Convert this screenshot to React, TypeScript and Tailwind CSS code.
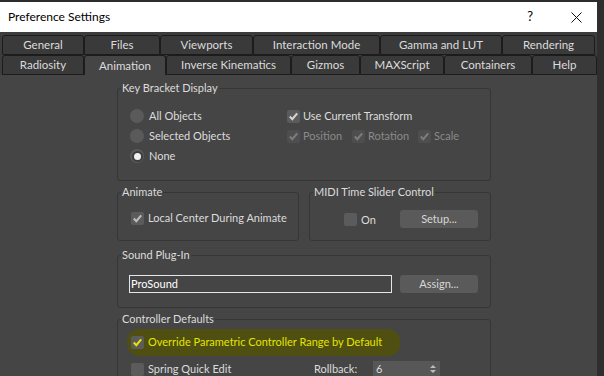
import React from 'react';

const font = "font-['Lato',sans-serif]";

const rowOne = [
  { label: 'General', w: 'w-[82px]' },
  { label: 'Files', w: 'w-[76px]' },
  { label: 'Viewports', w: 'w-[93px]' },
  { label: 'Interaction Mode', w: 'w-[127px]' },
  { label: 'Gamma and LUT', w: 'w-[122px]' },
  { label: 'Rendering', w: 'w-[93px]' },
];

const rowTwo = [
  { label: 'Radiosity', w: 'w-[82px]' },
  { label: 'Animation', w: 'w-[82px]', active: true },
  { label: 'Inverse Kinematics', w: 'w-[125px]' },
  { label: 'Gizmos', w: 'w-[69px]' },
  { label: 'MAXScript', w: 'w-[84px]' },
  { label: 'Containers', w: 'w-[88px]' },
  { label: 'Help', w: 'w-[65px]' },
];

interface CheckProps {
  checked?: boolean;
  disabled?: boolean;
  mark?: string;
}

const Check: React.FC<CheckProps> = ({ checked = false, disabled = false, mark = '#d4d4d4' }) => (
  <span
    className={`flex h-[13px] w-[13px] shrink-0 items-center justify-center rounded-[2px] ${
      disabled ? 'bg-[#4e4e4e]' : 'bg-[#5b5b5b]'
    }`}
  >
    {checked && (
      <svg width="11" height="11" viewBox="0 0 11 11">
        <path d="M1.8 5.6 L4.3 8.2 L9.2 2.4" fill="none" stroke={disabled ? '#7c7c7c' : mark} strokeWidth="2.1" />
      </svg>
    )}
  </span>
);

const Radio: React.FC<{ selected?: boolean; label: string }> = ({ selected = false, label }) => (
  <div className="flex h-[20px] items-center gap-[5px]">
    <span className="flex h-[14px] w-[14px] items-center justify-center rounded-full bg-[#5a5a5a]">
      {selected && <span className="h-[7px] w-[7px] rounded-full bg-[#f2f2f2] ring-2 ring-[#3e3e3e]" />}
    </span>
    <span>{label}</span>
  </div>
);

const Group: React.FC<{ title: string; className?: string; children: React.ReactNode }> = ({
  title,
  className = '',
  children,
}) => (
  <fieldset className={`min-w-0 rounded-[3px] border border-[#363636] ${className}`}>
    <legend className="ml-[3px] px-px text-[11px] leading-[16px] text-[#dcdcdc]">{title}</legend>
    {children}
  </fieldset>
);

const Button: React.FC<{ label: string }> = ({ label }) => (
  <button className="flex h-[18px] w-[78px] shrink-0 items-center justify-center rounded-[3px] bg-[#5a5a5a] text-[11px] text-[#d8d8d8]">
    {label}
  </button>
);

export default function App() {
  return (
    <div
      className={`flex h-[376px] w-[604px] flex-col overflow-hidden whitespace-nowrap bg-[#2b2b2b] ${font} text-[11px] text-[#dcdcdc]`}
    >
      <div className="h-[2px] shrink-0 bg-[#2d2d2d]" />
      <div className="flex min-h-0 flex-1">
        {/* dialog */}
        <div className="flex w-[597px] flex-col">
          <div className="flex h-[30px] shrink-0 items-center bg-white pl-[8px] pr-[15px] text-black">
            <span className="flex-1 text-[12px]">Preference Settings</span>
            <span className="mr-[38px] text-[13px]">?</span>
            <svg width="11" height="11" viewBox="0 0 11 11">
              <path d="M0.5 0.5 L10.5 10.5 M10.5 0.5 L0.5 10.5" stroke="#111" strokeWidth="1" />
            </svg>
          </div>

          <div className="shrink-0 bg-[#3c3c3c] pl-[2px] pt-[3px] text-[11.5px]">
            <div className="flex h-[20px]">
              {rowOne.map((t) => (
                <div
                  key={t.label}
                  className={`${t.w} flex items-center justify-center rounded-t-[3px] border border-[#1c1c1c] bg-[#3a3a3a] text-[#dcdcdc]`}
                >
                  {t.label}
                </div>
              ))}
            </div>
            <div className="flex h-[20px]">
              {rowTwo.map((t) => (
                <div
                  key={t.label}
                  className={`${t.w} flex items-center justify-center rounded-t-[3px] border border-[#1c1c1c] text-[#dcdcdc] ${
                    t.active ? 'border-b-0 bg-[#454545]' : 'bg-[#3a3a3a]'
                  }`}
                >
                  {t.label}
                </div>
              ))}
            </div>
          </div>

          <div className="flex min-h-0 flex-1 flex-col bg-[#454545] pl-[117px]">
            <Group title="Key Bracket Display" className="mt-[5px] w-[374px]">
              <div className="grid grid-cols-[157px_1fr] pb-[14px] pl-[12px] pt-[10px]">
                <div className="flex flex-col">
                  <Radio label="All Objects" />
                  <Radio label="Selected Objects" />
                  <Radio selected label="None" />
                </div>
                <div className="flex flex-col">
                  <div className="flex h-[20px] items-center gap-[3px]">
                    <Check checked />
                    <span>Use Current Transform</span>
                  </div>
                  <div className="flex h-[20px] items-center text-[#8a8a8a]">
                    <div className="flex w-[65px] items-center gap-[3px]">
                      <Check checked disabled />
                      <span>Position</span>
                    </div>
                    <div className="flex w-[66px] items-center gap-[3px]">
                      <Check checked disabled />
                      <span>Rotation</span>
                    </div>
                    <div className="flex items-center gap-[3px]">
                      <Check checked disabled />
                      <span>Scale</span>
                    </div>
                  </div>
                </div>
              </div>
            </Group>

            <div className="mt-[3px] flex gap-[10px]">
              <Group title="Animate" className="w-[182px]">
                <div className="mb-[12px] mt-[8px] flex h-[20px] items-center gap-[4px] pl-[13px]">
                  <Check checked mark="#bdbdbd" />
                  <span>Local Center During Animate</span>
                </div>
              </Group>
              <Group title="MIDI Time Slider Control" className="w-[182px]">
                <div className="mb-[12px] mt-[10px] flex h-[18px] items-center pl-[34px]">
                  <Check />
                  <span className="ml-[4px] mt-[2px] w-[39px]">On</span>
                  <Button label="Setup..." />
                </div>
              </Group>
            </div>

            <Group title="Sound Plug-In" className="mt-[6px] w-[374px]">
              <div className="mb-[14px] mt-[12px] flex h-[18px] items-center gap-[8px] pl-[11px]">
                <div className="flex h-[18px] w-[263px] items-center border border-[#e6e6e6] pl-[1px] text-white">
                  ProSound
                </div>
                <Button label="Assign..." />
              </div>
            </Group>

            <Group title="Controller Defaults" className="mt-[3px] w-[374px]">
              <div className="ml-[9px] mt-[2px] flex h-[27px] w-[273px] items-center gap-[4px] rounded-[12px] bg-[#4f4f12] pl-[4px] text-[#e4e400]">
                <Check checked mark="#e4e400" />
                <span>Override Parametric Controller Range by Default</span>
              </div>
              <div className="mt-[3px] flex h-[20px] items-center pl-[13px]">
                <div className="flex w-[183px] items-center gap-[4px]">
                  <Check />
                  <span>Spring Quick Edit</span>
                </div>
                <span className="w-[59px]">Rollback:</span>
                <div className="flex h-[17px] w-[67px] items-center justify-between bg-[#575757] pl-[3px] pr-[4px]">
                  <span>6</span>
                  <svg width="6" height="10" viewBox="0 0 6 10">
                    <path d="M0 4 L3 1 L6 4 Z M0 6 L3 9 L6 6 Z" fill="#bdbdbd" />
                  </svg>
                </div>
              </div>
            </Group>
          </div>
        </div>
        {/* desktop strip */}
        <div className="w-[7px] bg-[#2e2e2e]" />
      </div>
    </div>
  );
}
